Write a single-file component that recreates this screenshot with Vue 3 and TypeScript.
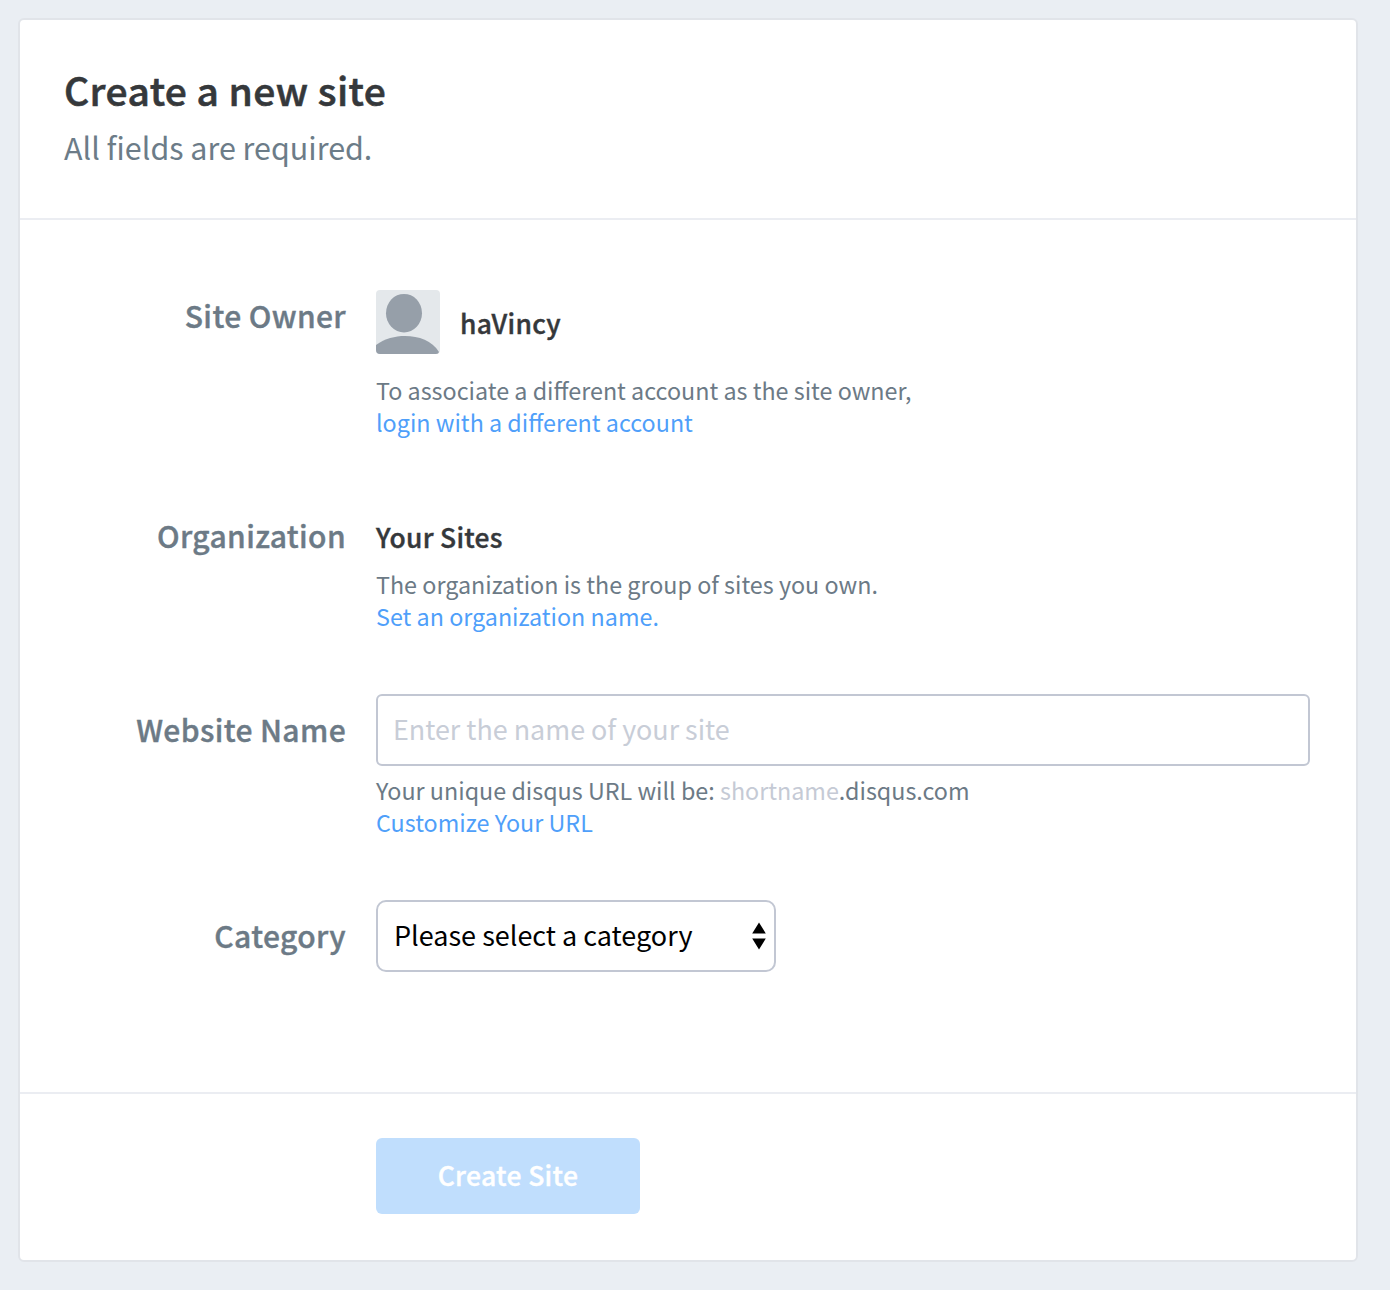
<script setup lang="ts">
import { ref } from 'vue'

const siteName = ref<string>('')
const category = ref<string>('Please select a category')
</script>

<template>
  <main class="page">
    <form class="card" @submit.prevent>
      <header class="head">
        <h1>Create a new site</h1>
        <p>All fields are required.</p>
      </header>
      <div class="body">
        <section class="row owner">
          <div class="label">Site Owner</div>
          <div class="field">
            <div class="user">
              <svg class="avatar" viewBox="0 0 64 64">
                <rect width="64" height="64" rx="4" fill="#e4e8eb" />
                <ellipse cx="28" cy="23.2" rx="18" ry="19.300" fill="#969fa9" />
                <path d="M0 55C9 48.500 19 46 29 46C43 46 56 50.500 63 62Q62.500 64 60 64H4Q0 64 0 60Z" fill="#969fa9" />
              </svg>
              <strong>haVincy</strong>
            </div>
            <p class="help">To associate a different account as the site owner,<br /><a>login with a different account</a></p>
          </div>
        </section>
        <section class="row org">
          <div class="label">Organization</div>
          <div class="field">
            <strong>Your Sites</strong>
            <p class="help">The organization is the group of sites you own.<br /><a>Set an organization name.</a></p>
          </div>
        </section>
        <section class="row site">
          <label class="label" for="site">Website Name</label>
          <div class="field">
            <input id="site" v-model="siteName" placeholder="Enter the name of your site" />
            <p class="help">Your unique disqus URL will be: <span class="short">shortname</span>.disqus.com<br /><a>Customize Your URL</a></p>
          </div>
        </section>
        <section class="row cat">
          <div class="label">Category</div>
          <button type="button" class="select">
            <span>{{ category }}</span>
            <svg viewBox="0 0 14 28" width="14" height="28"><path d="M7 0.500L13.800 11.500H0.200ZM0.200 16.500H13.800L7 27.500Z" /></svg>
          </button>
        </section>
      </div>
      <footer class="foot">
        <button type="submit" class="create">Create Site</button>
      </footer>
    </form>
  </main>
</template>

<style>
body { background: #eaeef3; }
</style>

<style scoped>
* { box-sizing: border-box; margin: 0; }
.page { height: 1290px; padding: 18px 32px 28px 18px; font-family: "Noto Sans CJK SC", sans-serif; }
.card { height: 1244px; background: #fff; border: 2px solid #e1e4e9; border-radius: 6px; display: flex; flex-direction: column; }
.head { height: 200px; padding: 42px 44px 0; border-bottom: 2px solid #ebedf2; }
h1, .label, strong, .create { font-weight: 500; -webkit-text-stroke: 0.4px currentColor; }
h1 { height: 56px; font-size: 39px; line-height: 54px; letter-spacing: 0.42px; color: #35383b; -webkit-text-stroke-width: 0.6px; }
.head p { font-size: 30.45px; line-height: 58px; color: #6c7c88; }
.body { height: 874px; padding-top: 70px; border-bottom: 2px solid #ebedf2; }
.row { display: flex; }
.owner { height: 220px; }
.org { height: 184px; }
.site { height: 206px; }
.label { width: 326px; margin-right: 30px; text-align: right; font-size: 30px; line-height: 50px; letter-spacing: 0.38px; color: #6c7a86; }
.field { width: 934px; }
.site .label, .cat .label { line-height: 70px; }
.user { display: flex; align-items: center; gap: 20px; height: 64px; }
.avatar { width: 64px; height: 64px; }
strong { display: block; font-size: 26.4px; line-height: 54px; letter-spacing: 0.3px; color: #35383b; }
.user strong { padding-top: 2px; }
.help { font-size: 23.32px; line-height: 32px; color: #6c7a86; }
a { color: #4f9ffa; }
.owner .help { margin-top: 20px; }
.org .help { margin-top: 4px; }
.site .help { margin-top: 8px; }
input { display: block; width: 934px; height: 72px; border: 2px solid #c2c7d3; border-radius: 6px; padding: 0 15px 4px; font: 400 26.9px "Noto Sans CJK SC", sans-serif; }
input::placeholder { color: #c8cdd7; opacity: 1; }
.short { color: #c5cad5; }
.select { width: 400px; height: 72px; background: #fff; border: 2px solid #c2c7d3; border-radius: 10px; padding: 0 8px 0 16px; display: flex; align-items: center; justify-content: space-between; font: 400 27px "Noto Sans CJK SC", sans-serif; color: #000; }
.select span { padding-bottom: 4px; }
.foot { padding: 44px 0 0 356px; }
.create { width: 264px; height: 76px; border: 0; border-radius: 6px; padding: 0 0 4px; background: #c0defd; color: #fff; font-family: inherit; font-size: 26.5px; letter-spacing: 0.35px; }
</style>
